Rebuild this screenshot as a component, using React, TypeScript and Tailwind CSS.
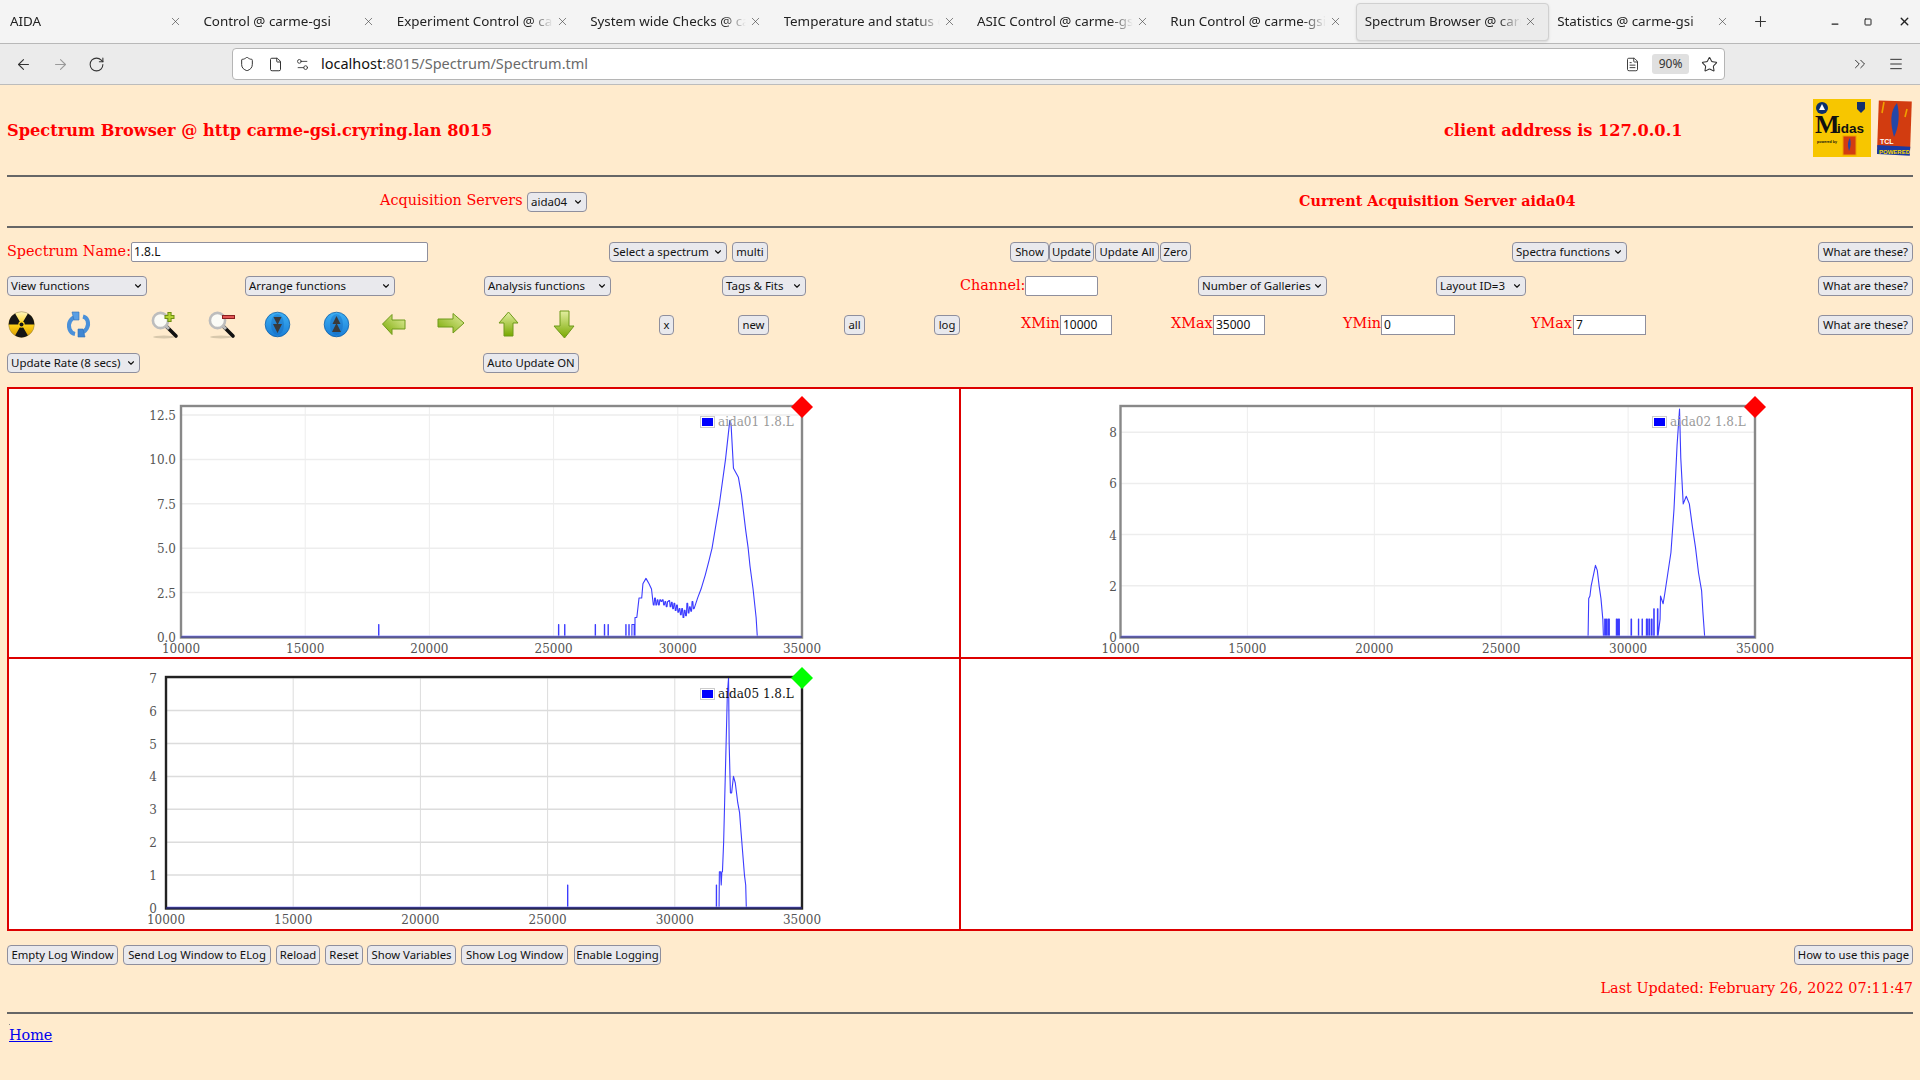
import React from 'react';
import { ArrowLeft, ArrowRight, RotateCw, Shield, File, Settings2, Star, ChevronsRight, ChevronDown, Menu, Minus, Plus, X, Square, FileText } from 'lucide-react';

type Pt = [number, number];

interface PlotProps {
  origin: [number, number];
  size: [number, number];
  frame: [number, number, number, number];
  yZero: number;
  yScale: number;
  yTicks: { v: number; label: string }[];
  labelRight: number;
  xLabelY: number;
  legendX: number;
  legendY: number;
  legend: string;
  points: Pt[];
  active?: boolean;
}

const spike = (c: number, v = 0.7, w = 12): Pt[] => [[c - 1, 0], [c, v], [c + w, v], [c + w + 1, 0]];

const noise = [1.8, 2.2, 1.8, 2.1, 1.8, 2.1, 2.0, 2.1, 1.8, 2.0, 1.7, 2.0, 2.05, 1.7, 1.95, 1.6, 1.9, 1.5, 1.8, 1.4, 1.6, 1.25, 1.6, 1.1, 1.5, 1.2, 1.9, 1.35, 1.7, 1.45, 2.0, 1.6];

const aida01: Pt[] = [
  [10000, 0],
  ...spike(17955), ...spike(25197), ...spike(25443), ...spike(26675), ...spike(27044), ...spike(27192),
  ...spike(27906), ...spike(28030), ...spike(28153, 0.7, 90),
  [28276, 0], [28277, 1.1], [28350, 1.1], [28440, 2.2], [28547, 2.2], [28596, 3.0], [28719, 3.3], [28842, 3.0], [28941, 2.7],
  ...noise.flatMap((v, i): Pt[] => [[29015 + i * 52, v], [29045 + i * 52, v]]),
  [30800, 2.2], [30936, 2.7], [31108, 3.5], [31256, 4.3], [31379, 5], [31675, 7.5], [31921, 10], [32094, 12.2], [32143, 12.0], [32241, 9.5],
  [32438, 9.0], [32562, 8.0], [32734, 6], [32833, 5], [32906, 4], [33030, 2.7], [33153, 1.1], [33202, 0], [35000, 0],
];

const aida02: Pt[] = [
  [10000, 0], [28423, 0], [28448, 1.5], [28496, 1.6], [28545, 2.0], [28714, 2.8], [28786, 2.6], [28858, 2.0], [28931, 1.5], [29004, 0.7], [29028, 0],
  ...spike(29077, 0.7, 30), ...spike(29150, 0.7, 20), ...spike(29222, 0.7, 40), ...spike(29536, 0.7, 40), ...spike(29620, 0.7, 37), ...spike(30116, 0.7, 20),
  ...spike(30406), ...spike(30551), ...spike(30720, 0.7, 40), ...spike(30817, 0.7, 30), ...spike(30914, 0.7, 30), ...spike(31010, 1.1, 20), ...spike(31155, 1.1, 20),
  [31260, 0.7], [31277, 1.6], [31380, 1.3], [31446, 1.7], [31567, 2.5], [31688, 3.3], [31809, 5], [31930, 7.5], [32027, 8.9], [32075, 7], [32172, 5.2],
  [32292, 5.5], [32413, 5.2], [32534, 4.3], [32655, 3.5], [32776, 2.5], [32897, 1.8], [32945, 1], [33018, 0], [35000, 0],
];

const aida05: Pt[] = [
  [10000, 0], ...spike(25785, 0.7, 10), ...spike(31632, 0.7, 10),
  [31740, 0], [31752, 1.1], [31800, 1.1], [31825, 0.7], [31850, 1.1], [31873, 1.1], [31920, 2], [31968, 3.5], [32017, 5], [32065, 6.5], [32113, 7],
  [32137, 5], [32186, 3.5], [32234, 3.5], [32306, 4], [32378, 3.8], [32474, 3.2], [32546, 2.9], [32594, 2.4], [32666, 1.7], [32738, 1], [32787, 0.7], [32811, 0], [35000, 0],
];

const xTicks = [10000, 15000, 20000, 25000, 30000, 35000];

const Plot: React.FC<PlotProps> = ({ origin, size, frame, yZero, yScale, yTicks, labelRight, xLabelY, legendX, legendY, legend, points, active }) => {
  const [left, right, top, bottom] = frame;
  const px = (c: number) => left + ((c - 10000) / 25000) * (right - left);
  const py = (v: number) => yZero - v * yScale;
  const frameColor = active ? '#222222' : '#888888';
  const gridColor = active ? '#dcdcdc' : '#ededed';
  return (
    <svg width={size[0]} height={size[1]} viewBox={`${origin[0]} ${origin[1]} ${size[0]} ${size[1]}`} className="block font-['DejaVu_Serif',serif]">
      {xTicks.slice(1, 5).map((t) => (
        <line key={t} x1={px(t)} x2={px(t)} y1={top} y2={bottom} stroke={gridColor} strokeWidth={1} />
      ))}
      {yTicks.map((t) => (
        <line key={t.label} x1={left} x2={right} y1={py(t.v)} y2={py(t.v)} stroke={gridColor} strokeWidth={1.5} />
      ))}
      <polyline points={points.map(([c, v]) => `${px(c)},${py(v)}`).join(' ')} fill="none" stroke="#3c3cff" strokeWidth={1.1} strokeLinejoin="round" />
      <line x1={left} x2={right} y1={yZero - 1} y2={yZero - 1} stroke="#a9a9ff" strokeWidth={1} />
      <rect x={left} y={top} width={right - left} height={bottom - top} fill="none" stroke={frameColor} strokeWidth={2.4} />
      <line x1={left} x2={right} y1={bottom - 0.5} y2={bottom - 0.5} stroke="#2a2aa0" strokeWidth={1} />
      {xTicks.map((t) => (
        <text key={t} x={px(t)} y={xLabelY} textAnchor="middle" dominantBaseline="middle" fontSize={12} fill="#545454">{t}</text>
      ))}
      {yTicks.map((t) => (
        <text key={t.label} x={labelRight} y={py(t.v) + 1.5} textAnchor="end" dominantBaseline="middle" fontSize={12} fill="#545454">{t.label}</text>
      ))}
      <rect x={legendX + 0.5} y={legendY + 0.5} width={14} height={11} fill="#ffffff" stroke="#cccccc" />
      <rect x={legendX + 2} y={legendY + 2} width={11} height={8} fill="#0000ff" />
      <text x={legendX + 18} y={legendY + 6} dominantBaseline="middle" fontSize={12} fill={active ? '#111111' : '#999999'}>{legend}</text>
      <polygon points={`${right},${top - 10} ${right + 11},${top + 1} ${right},${top + 12} ${right - 11},${top + 1}`} fill={active ? '#00ff00' : '#ff0000'} />
    </svg>
  );
};

const Btn: React.FC<{ className: string; children: React.ReactNode }> = ({ className, children }) => (
  <button className={`h-5 shrink-0 rounded-[4px] border border-[#8f8f9d] bg-[#e9e9ed] text-center text-[11.3px] leading-none whitespace-nowrap text-[#111] ${className}`}>
    {children}
  </button>
);

const Sel: React.FC<{ className: string; children: React.ReactNode }> = ({ className, children }) => (
  <div className={`flex h-5 shrink-0 items-center justify-between rounded-[4px] border border-[#8f8f9d] bg-[#e9e9ed] pr-[3px] pl-[3px] text-[11.5px] leading-none whitespace-nowrap text-[#111] ${className}`}>
    <span>{children}</span>
    <ChevronDown size={10} strokeWidth={2.6} />
  </div>
);

const Txt: React.FC<{ className: string; value?: string }> = ({ className, value }) => (
  <div className={`flex h-5 shrink-0 items-center border border-[#8f8f9d] bg-white pl-[2px] text-[12px] text-[#111] ${className}`}>{value}</div>
);

const Label: React.FC<{ className: string; children: React.ReactNode }> = ({ className, children }) => (
  <span className={`mb-[2px] shrink-0 font-['DejaVu_Serif',serif] text-[14.4px] leading-none whitespace-nowrap text-[#ff0000] ${className}`}>{children}</span>
);

const IconBox: React.FC<{ className?: string; children: React.ReactNode }> = ({ className = '', children }) => (
  <svg width="29" height="29" viewBox="0 0 29 29" className={`shrink-0 ${className}`}>{children}</svg>
);

const Radiation = () => (
  <IconBox>
    <defs>
      <linearGradient id="rad" x1="0" y1="0" x2="0" y2="1">
        <stop offset="0" stopColor="#fff6c0" />
        <stop offset="0.5" stopColor="#ffd21a" />
        <stop offset="1" stopColor="#d99a00" />
      </linearGradient>
    </defs>
    <circle cx="14.5" cy="14.5" r="12.8" fill="url(#rad)" stroke="#8a7a40" strokeWidth="0.5" />
    <path d="M14.5 14.5L27.3 14.5A12.8 12.8 0 0 0 20.9 3.4ZM14.5 14.5L8.1 3.4A12.8 12.8 0 0 0 1.7 14.5ZM14.5 14.5L8.1 25.6A12.8 12.8 0 0 0 20.9 25.6Z" fill="#151515" />
    <circle cx="14.5" cy="14.5" r="3.2" fill="#ffd21a" />
    <circle cx="14.5" cy="14.5" r="2" fill="#151515" />
  </IconBox>
);

const Refresh = () => (
  <IconBox>
    <g fill="none" stroke="#4a90d9" strokeWidth="4">
      <path d="M13 6.5C7 7.5 3.5 13 5.5 19C6.5 22 8.5 23.5 11 24" />
      <path d="M16 23C22 22 25.5 16 23.5 10.5C22.5 8 21 7 19 6.5" />
    </g>
    <polygon points="8,2 15,2 15,10 10,10" fill="#5a9fe4" stroke="#2f6fb5" strokeWidth="0.6" />
    <polygon points="21,27 14,27 14,19 19,19" fill="#3f86d2" stroke="#2f6fb5" strokeWidth="0.6" />
  </IconBox>
);

const Lens: React.FC<{ plus?: boolean }> = ({ plus }) => (
  <IconBox>
    <ellipse cx="14" cy="27" rx="11" ry="1.5" fill="#d8c8ac" />
    <line x1="16" y1="16" x2="26" y2="26" stroke="#111111" strokeWidth="3.6" strokeLinecap="round" />
    <line x1="15" y1="15" x2="19" y2="19" stroke="#bbbbbb" strokeWidth="3" />
    <circle cx="10.5" cy="10.5" r="7.6" fill="#fbfbf6" stroke="#bdbdbd" strokeWidth="2.6" />
    {plus ? (
      <path d="M19.5 2V12M14.5 7H24.5" stroke="#6f8f10" strokeWidth="4.2" />
    ) : (
      <path d="M15 7H28" stroke="#8a2020" strokeWidth="4" />
    )}
    {plus ? <path d="M19.5 3V11M15.5 7H23.5" stroke="#b4d334" strokeWidth="2.2" /> : <path d="M16 7H27" stroke="#e25555" strokeWidth="2" />}
  </IconBox>
);

const Round: React.FC<{ id: string; up?: boolean }> = ({ id, up }) => (
  <IconBox>
    <defs>
      <linearGradient id={id} x1="0" y1="0" x2="0" y2="1">
        <stop offset="0" stopColor="#3db0f5" />
        <stop offset="1" stopColor="#1a7ed6" />
      </linearGradient>
    </defs>
    <circle cx="14.5" cy="14.5" r="12.3" fill={`url(#${id})`} stroke="#0f5fa8" strokeWidth="0.8" />
    <ellipse cx="14.5" cy="14.5" rx="6.5" ry="10.5" fill="#0e5fb4" opacity="0.35" />
    {up ? (
      <path d="M14.5 6L18.5 14H10.5ZM14.5 13L19 22H10Z" fill="#3a3a3a" />
    ) : (
      <path d="M10.5 7H18.5L14.5 15ZM10 14H19L14.5 23Z" fill="#3a3a3a" />
    )}
  </IconBox>
);

const GreenArrow: React.FC<{ id: string; points: string; from: [string, string]; to: [string, string] }> = ({ id, points, from, to }) => (
  <IconBox>
    <defs>
      <linearGradient id={id} x1={from[0]} y1={from[1]} x2={to[0]} y2={to[1]}>
        <stop offset="0" stopColor="#78a800" />
        <stop offset="1" stopColor="#e3eea0" />
      </linearGradient>
    </defs>
    <polygon points={points} fill={`url(#${id})`} stroke="#6f9a1a" strokeWidth="1" />
  </IconBox>
);

const tabs = [
  'AIDA',
  'Control @ carme-gsi',
  'Experiment Control @ carme-gsi',
  'System wide Checks @ carme-gsi',
  'Temperature and status @ carme-gsi',
  'ASIC Control @ carme-gsi',
  'Run Control @ carme-gsi',
  'Spectrum Browser @ carme-gsi',
  'Statistics @ carme-gsi',
];

const BrowserChrome = () => (
  <div className="font-['Noto_Sans',sans-serif]">
    <div className="flex h-[44px] items-center border-b border-[#b8b8b8] bg-[#f4f4f4] pl-[2px] text-[13.4px] text-[#222]">
      {tabs.map((t, i) => (
        <div key={t} className={`flex h-[38px] w-[193.4px] shrink-0 items-center rounded-[4px] pl-2 ${i === 7 ? 'border border-[#d0d0d0] bg-[#ebebeb] shadow-sm' : ''}`}>
          <span className="w-[156px] overflow-hidden whitespace-nowrap [mask-image:linear-gradient(to_right,black_85%,transparent)]">{t}</span>
          <X size={13} strokeWidth={1.2} className="ml-[3px] shrink-0 text-[#444]" />
        </div>
      ))}
      <Plus size={17} strokeWidth={1.5} className="ml-[9px] shrink-0 text-[#333]" />
      <Minus size={10} strokeWidth={3} className="ml-[61px] mt-[4px] shrink-0 text-[#222]" />
      <Square size={8} strokeWidth={3} className="ml-[24px] shrink-0 text-[#222]" />
      <X size={13} strokeWidth={2.6} className="ml-[26px] shrink-0 text-[#222]" />
    </div>
    <div className="flex h-[41px] items-center border-b border-[#bcbcbc] bg-[#ebebeb] text-[#333]">
      <ArrowLeft size={17} strokeWidth={1.5} className="ml-[15px] shrink-0" />
      <ArrowRight size={17} strokeWidth={1.5} className="ml-[20px] shrink-0 text-[#9a9a9a]" />
      <RotateCw size={17} strokeWidth={1.5} className="ml-[19px] shrink-0" />
      <div className="ml-[127px] flex h-[32px] w-[1493px] shrink-0 items-center rounded-[4px] border border-[#b5b5b5] bg-white">
        <Shield size={16} strokeWidth={1.5} className="ml-[6px] shrink-0" />
        <File size={15} strokeWidth={1.6} className="ml-[13px] shrink-0" />
        <Settings2 size={15} strokeWidth={1.4} className="ml-[12px] shrink-0" />
        <span className="ml-[11px] text-[14.5px] whitespace-nowrap text-[#111]">
          localhost<span className="text-[#6a6a6a]">:8015/Spectrum/Spectrum.tml</span>
        </span>
        <FileText size={15} strokeWidth={1.5} className="ml-[1037px] shrink-0" />
        <div className="ml-[12px] flex h-5 w-[37px] shrink-0 items-center justify-center rounded-[3px] bg-[#e0e0e0] text-[12px]">90%</div>
        <Star size={17} strokeWidth={1.5} className="ml-[12px] shrink-0" />
      </div>
      <ChevronsRight size={18} strokeWidth={1.3} className="ml-[126px] shrink-0" />
      <Menu size={16} strokeWidth={1.5} className="ml-[19px] shrink-0" />
    </div>
  </div>
);

const Logos = () => (
  <div className="mb-[4px] flex shrink-0 items-start gap-[6px]">
    <svg width="58" height="58" viewBox="0 0 58 58" className="block">
      <rect width="58" height="58" fill="#f7c600" />
      <circle cx="9" cy="9" r="6" fill="#0b2f6b" />
      <path d="M9 5L12 11H6Z" fill="#ffffff" />
      <path d="M44 3H52V10L48 14L44 10Z" fill="#14306e" />
      <text x="2" y="34" fontFamily="'Liberation Serif', serif" fontWeight="bold" fontSize="26" fill="#111">M</text>
      <text x="24" y="34" fontFamily="'Liberation Sans', sans-serif" fontWeight="bold" fontSize="13.5" fill="#111">idas</text>
      <text x="4" y="44" fontFamily="'Liberation Sans', sans-serif" fontWeight="bold" fontSize="3.6" fill="#111">powered by</text>
      <rect x="30" y="37" width="13" height="19" fill="#d23c10" stroke="#f0a000" strokeWidth="1" />
      <path d="M37 39C34 43 35 48 36 52C38 48 38 43 37 39Z" fill="#2447a8" />
    </svg>
    <svg width="37" height="58" viewBox="0 0 37 58" className="block">
      <rect x="1" y="2" width="33" height="47" fill="#d23c10" transform="rotate(2 17 25)" />
      <path d="M20 4C13 12 13 24 17 38C22 28 23 14 20 4Z" fill="#2447a8" />
      <path d="M7 3L5 14M30 10L28 18" stroke="#f0a000" strokeWidth="1.6" />
      <text x="3" y="45" fontFamily="'Liberation Sans', sans-serif" fontWeight="bold" fontSize="7" fill="#ffffff">TCL</text>
      <rect x="0" y="47" width="33" height="9" fill="#1a3aa0" transform="rotate(3 17 52)" />
      <text x="2" y="54.5" fontFamily="'Liberation Sans', sans-serif" fontWeight="bold" fontSize="6" fill="#f7d800">POWERED</text>
    </svg>
  </div>
);

const Rule: React.FC<{ className?: string }> = ({ className = '' }) => <div className={`h-[2px] w-[1906px] bg-[#666666] ${className}`} />;

export default function App() {
  return (
    <div className="min-h-screen w-[1920px] overflow-hidden bg-[#ffebcd]">
      <BrowserChrome />
      <div className="pl-[7px] font-['Noto_Sans',sans-serif]">
        <div className="flex h-[90px] items-center font-['DejaVu_Serif',serif] text-[16.2px] font-bold text-[#ff0000]">
          <span className="w-[1437px] shrink-0 pt-[2px]">Spectrum Browser @ http carme-gsi.cryring.lan 8015</span>
          <span className="w-[369px] shrink-0 pt-[2px]">client address is 127.0.0.1</span>
          <Logos />
        </div>
        <Rule />
        <div className="flex h-[49px] items-center">
          <Label className="ml-[373px] w-[147px]">Acquisition Servers</Label>
          <Sel className="w-[60px]">aida04</Sel>
          <span className="mb-[2px] ml-[712px] shrink-0 font-['DejaVu_Serif',serif] text-[14.4px] font-bold text-[#ff0000]">Current Acquisition Server aida04</span>
        </div>
        <Rule />

        <div className="mt-[14px] flex items-center">
          <Label className="w-[124px]">Spectrum Name:</Label>
          <Txt className="w-[297px] rounded-[2px]" value="1.8.L" />
          <Sel className="ml-[181px] w-[118px]">Select a spectrum</Sel>
          <Btn className="ml-[5px] w-[36px]">multi</Btn>
          <Btn className="ml-[242px] w-[39px]">Show</Btn>
          <Btn className="w-[45px]">Update</Btn>
          <Btn className="ml-px w-[64px]">Update All</Btn>
          <Btn className="ml-px w-[31px]">Zero</Btn>
          <Sel className="ml-[321px] w-[115px]">Spectra functions</Sel>
          <Btn className="ml-[191px] w-[95px]">What are these?</Btn>
        </div>

        <div className="mt-[14px] flex items-center">
          <Sel className="w-[140px]">View functions</Sel>
          <Sel className="ml-[98px] w-[150px]">Arrange functions</Sel>
          <Sel className="ml-[89px] w-[127px]">Analysis functions</Sel>
          <Sel className="ml-[111px] w-[84px]">Tags &amp; Fits</Sel>
          <Label className="ml-[154px] w-[65px]">Channel:</Label>
          <Txt className="w-[73px] rounded-[2px]" />
          <Sel className="ml-[100px] w-[129px]">Number of Galleries</Sel>
          <Sel className="ml-[109px] w-[90px]">Layout ID=3</Sel>
          <Btn className="ml-[292px] w-[95px]">What are these?</Btn>
        </div>

        <div className="mt-[14px] flex h-[29px] items-center">
          <Radiation />
          <div className="ml-[28px] shrink-0"><Refresh /></div>
          <div className="ml-[57px] shrink-0"><Lens plus /></div>
          <div className="ml-[28px] shrink-0"><Lens /></div>
          <div className="ml-[27px] shrink-0"><Round id="rd" /></div>
          <div className="ml-[30px] shrink-0"><Round id="ru" up /></div>
          <div className="ml-[28px] shrink-0"><GreenArrow id="ga" from={['0', '1']} to={['1', '0']} points="3.5,14 13,4.5 13,10 26,10 26,19 13,19 13,24.5" /></div>
          <div className="ml-[28px] shrink-0"><GreenArrow id="gb" from={['0', '1']} to={['1', '0']} points="2,9 17,9 17,3.5 28,13 17,23 17,17 2,17" /></div>
          <div className="ml-[29px] shrink-0"><GreenArrow id="gc" from={['0', '1']} to={['0', '0']} points="14.5,2 24,13 19,13 19,26 10,26 10,13 5,13" /></div>
          <div className="ml-[27px] shrink-0"><GreenArrow id="gd" from={['0.5', '1']} to={['0.5', '0']} points="10,1 19,1 19,16 24,16 14.5,28 4,16 10,16" /></div>
          <Btn className="ml-[80px] w-[15px]">x</Btn>
          <Btn className="ml-[64px] w-[31px]">new</Btn>
          <Btn className="ml-[75px] w-[21px]">all</Btn>
          <Btn className="ml-[69px] w-[26px]">log</Btn>
          <Label className="ml-[61px] w-[39px]">XMin</Label>
          <Txt className="w-[52px]" value="10000" />
          <Label className="ml-[59px] w-[42px]">XMax</Label>
          <Txt className="w-[52px]" value="35000" />
          <Label className="ml-[78px] w-[38px]">YMin</Label>
          <Txt className="w-[74px]" value="0" />
          <Label className="ml-[76px] w-[42px]">YMax</Label>
          <Txt className="w-[73px]" value="7" />
          <Btn className="ml-[172px] w-[95px]">What are these?</Btn>
        </div>

        <div className="mt-[14px] flex items-center">
          <Sel className="w-[133px]">Update Rate (8 secs)</Sel>
          <Btn className="ml-[343px] w-[96px]">Auto Update ON</Btn>
        </div>

        <div className="mt-[14px] grid h-[544px] w-[1906px] grid-cols-[952px_950px] grid-rows-[270px_270px] border-2 border-[#dd0000] bg-white">
          <div className="border-r-2 border-b-2 border-[#dd0000]">
            <Plot origin={[9, 389]} size={[950, 268]} frame={[181, 802, 406, 637.5]} yZero={637} yScale={17.76}
              yTicks={[{ v: 0, label: '0.0' }, { v: 2.5, label: '2.5' }, { v: 5, label: '5.0' }, { v: 7.5, label: '7.5' }, { v: 10, label: '10.0' }, { v: 12.5, label: '12.5' }]}
              labelRight={176} xLabelY={649} legendX={700} legendY={416} legend="aida01 1.8.L" points={aida01} />
          </div>
          <div className="border-b-2 border-[#dd0000]">
            <Plot origin={[961, 389]} size={[950, 268]} frame={[1120.5, 1755, 406, 637.5]} yZero={637} yScale={25.6}
              yTicks={[{ v: 0, label: '0' }, { v: 2, label: '2' }, { v: 4, label: '4' }, { v: 6, label: '6' }, { v: 8, label: '8' }]}
              labelRight={1117} xLabelY={649} legendX={1652} legendY={416} legend="aida02 1.8.L" points={aida02} />
          </div>
          <div className="border-r-2 border-[#dd0000]">
            <Plot origin={[9, 659]} size={[950, 270]} frame={[166, 802, 677, 908.5]} yZero={908} yScale={32.9}
              yTicks={[{ v: 0, label: '0' }, { v: 1, label: '1' }, { v: 2, label: '2' }, { v: 3, label: '3' }, { v: 4, label: '4' }, { v: 5, label: '5' }, { v: 6, label: '6' }, { v: 7, label: '7' }]}
              labelRight={157} xLabelY={920} legendX={700} legendY={688} legend="aida05 1.8.L" points={aida05} active />
          </div>
          <div />
        </div>

        <div className="mt-[14px] flex items-center">
          <Btn className="w-[111px]">Empty Log Window</Btn>
          <Btn className="ml-[5px] w-[148px]">Send Log Window to ELog</Btn>
          <Btn className="ml-[5px] w-[44px]">Reload</Btn>
          <Btn className="ml-[5px] w-[38px]">Reset</Btn>
          <Btn className="ml-[4px] w-[89px]">Show Variables</Btn>
          <Btn className="ml-[5px] w-[107px]">Show Log Window</Btn>
          <Btn className="ml-[6px] w-[87px]">Enable Logging</Btn>
          <Btn className="ml-[1133px] w-[119px]">How to use this page</Btn>
        </div>
        <div className="mt-[14px] w-[1906px] text-right font-['DejaVu_Serif',serif] text-[14.4px] leading-[18px] text-[#ff0000]">
          Last Updated: February 26, 2022 07:11:47
        </div>
        <Rule className="mt-[15px]" />
        <div className="mt-[10px] ml-[2px] h-px w-px bg-[#888]" />
        <a href="#home" className="mt-[1px] ml-[2px] block w-fit font-['DejaVu_Serif',serif] text-[14.4px] leading-[18px] text-[#0000ee] underline">Home</a>
      </div>
    </div>
  );
}
